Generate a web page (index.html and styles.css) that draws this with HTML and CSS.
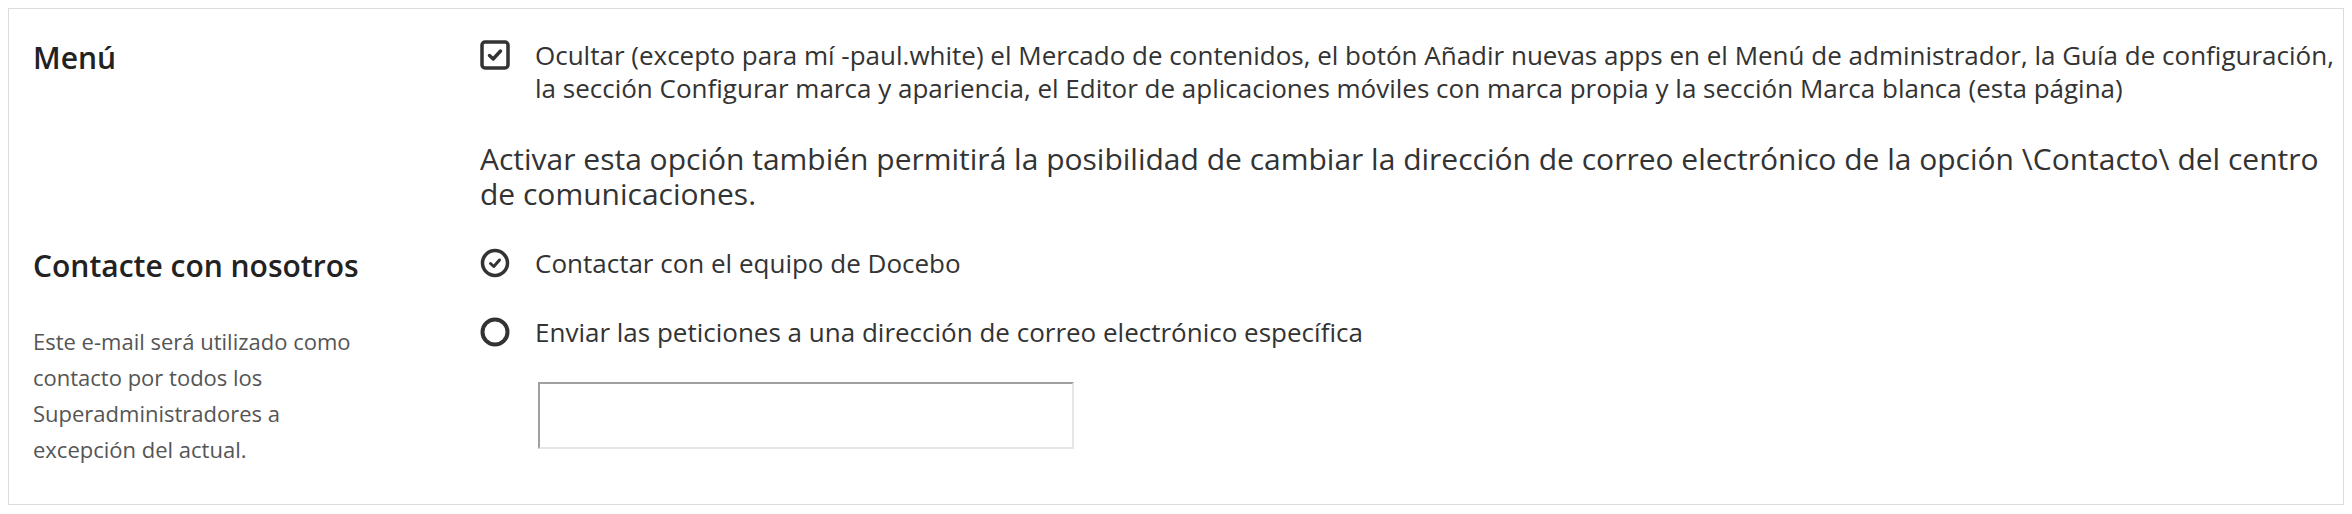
FILE: index.html
```html
<!DOCTYPE html>
<html lang="es">
  <head>
    <meta charset="UTF-8" />
    <meta name="viewport" content="width=device-width, initial-scale=1.0" />
    <title>Marca blanca</title>
    <link rel="stylesheet" href="styles.css">
  </head>
  <body>
    <div class="card">
      <div class="setting">
        <div class="setting-label">
          <h3>Menú</h3>
        </div>
        <div class="setting-body">
          <label class="choice">
            <svg class="icon" width="30" height="30" viewBox="0 0 30 30">
              <rect x="2" y="2" width="26" height="26" rx="3" fill="none" stroke="#333" stroke-width="3.5" />
              <path d="M9.5 15.5 L13.2 19 L20.5 11" fill="none" stroke="#333" stroke-width="3.4" stroke-linecap="round" stroke-linejoin="round" />
            </svg>
            <span>Ocultar (excepto para mí -paul.white) el Mercado de contenidos, el botón Añadir nuevas apps en el Menú de administrador, la Guía de configuración, la sección Configurar marca y apariencia, el Editor de aplicaciones móviles con marca propia y la sección Marca blanca (esta página)</span>
          </label>
          <p class="note">Activar esta opción también permitirá la posibilidad de cambiar la dirección de correo electrónico de la opción \Contacto\ del centro de comunicaciones.</p>
        </div>
      </div>

      <div class="setting">
        <div class="setting-label">
          <h3>Contacte con nosotros</h3>
          <p class="hint">Este e-mail será utilizado como contacto por todos los Superadministradores a excepción del actual.</p>
        </div>
        <div class="setting-body">
          <label class="choice">
            <svg class="icon" width="30" height="30" viewBox="0 0 30 30">
              <circle cx="15" cy="15" r="12.5" fill="none" stroke="#333" stroke-width="3.5" />
              <path d="M10.5 15.5 L13.8 18.5 L19.5 12" fill="none" stroke="#333" stroke-width="3" stroke-linecap="round" stroke-linejoin="round" />
            </svg>
            <span>Contactar con el equipo de Docebo</span>
          </label>
          <label class="choice">
            <svg class="icon" width="30" height="30" viewBox="0 0 30 30">
              <circle cx="15" cy="15" r="12.5" fill="none" stroke="#333" stroke-width="4" />
            </svg>
            <span>Enviar las peticiones a una dirección de correo electrónico específica</span>
          </label>
          <input class="email" type="text" />
        </div>
      </div>
    </div>
  </body>
</html>
```

FILE: styles.css
```css
body {
  margin: 8px;
  background: #fff;
  font-family: "Open Sans", "Noto Sans", sans-serif;
  color: #333;
}

.card {
  border: 1px solid #dcdcdc;
  box-shadow: 0 1px 3px rgba(0, 0, 0, 0.18);
  padding: 30px 8px 37px 24px;
  display: flex;
  flex-direction: column;
  gap: 36px;
}

.setting {
  display: grid;
  grid-template-columns: 447px 1fr;
}

.setting-label h3 {
  margin: 2px 0 0;
  font-size: 30px;
  font-weight: 600;
  line-height: 33px;
  color: #222;
}

.hint {
  margin: 41px 0 0;
  max-width: 330px;
  font-size: 22px;
  line-height: 36px;
  color: #555;
}

.setting-body {
  display: flex;
  flex-direction: column;
  align-items: flex-start;
}

.choice {
  display: flex;
  align-items: flex-start;
  gap: 25px;
  font-size: 26px;
  line-height: 33px;
  cursor: pointer;
}

.choice + .choice {
  margin-top: 36px;
}

.icon {
  flex: none;
  margin-top: 1px;
}

.note {
  margin: 36px 0 0;
  font-size: 30px;
  line-height: 35px;
  color: #333;
}

.email {
  margin: 33px 0 0 58px;
  width: 536px;
  height: 67px;
  box-sizing: border-box;
  border: 2px solid #e6e6e6;
  border-top-color: #a0a0a0;
  border-left-color: #a0a0a0;
  padding: 0 12px;
  font: inherit;
}
```
